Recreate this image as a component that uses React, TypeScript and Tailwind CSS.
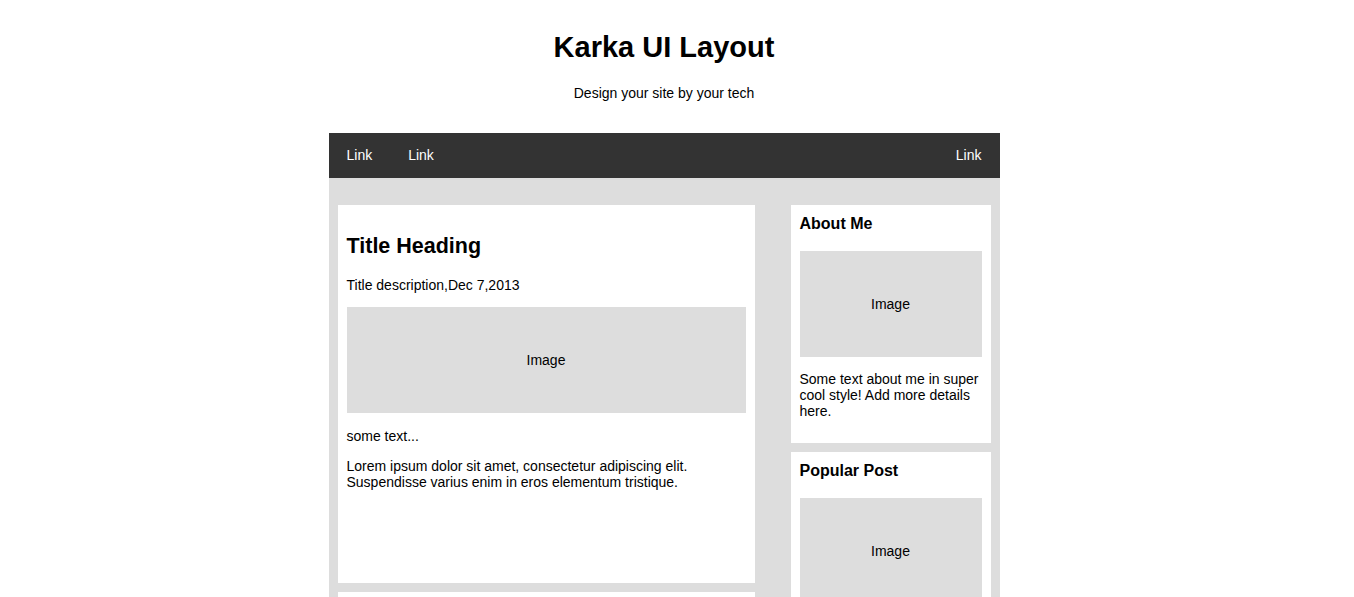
import { FC } from "react";

const ImageBox: FC<{ className?: string }> = ({ className }) => (
  <div
    className={`bg-[#dddddd] h-[106px] flex items-center justify-center text-[14px] leading-[16px] ${className ?? ""}`}
  >
    Image
  </div>
);

const Post: FC = () => (
  <div className="bg-white h-[378px] px-[9px] pt-[29px]">
    <h2 className="text-[21.5px] leading-[24px] font-bold">Title Heading</h2>
    <p className="mt-[19px] text-[14px] leading-[16px]">Title description,Dec 7,2013</p>
    <ImageBox className="mt-[14px]" />
    <p className="mt-[15px] text-[14px] leading-[16px]">some text...</p>
    <p className="mt-[14px] text-[14px] leading-[16px]">
      Lorem ipsum dolor sit amet, consectetur adipiscing elit.
      <br />
      Suspendisse varius enim in eros elementum tristique.
    </p>
  </div>
);

const SideCard: FC<{ title: string; children: React.ReactNode }> = ({ title, children }) => (
  <div className="bg-white px-[9px] pt-[10px] pb-[24px]">
    <h3 className="text-[16px] leading-[18px] font-bold">{title}</h3>
    <div className="mt-[18px]">{children}</div>
  </div>
);

export default function App() {
  return (
    <div className="bg-white text-black font-['Liberation_Sans',Arial,sans-serif] pr-[26px]">
      <div className="w-[671px] mx-auto">
        <header className="pt-[31px] pb-[32px] text-center">
          <h1 className="text-[29px] leading-[32px] font-bold">Karka UI Layout</h1>
          <p className="mt-[22px] text-[14px] leading-[16px]">Design your site by your tech</p>
        </header>

        <nav className="bg-[#333333] h-[45px] flex items-center text-white text-[14px]">
          <a href="#" className="px-[18px]">Link</a>
          <a href="#" className="px-[18px]">Link</a>
          <a href="#" className="px-[18px] ml-auto">Link</a>
        </nav>

        <div className="bg-[#dddddd] px-[9px] pt-[27px] pb-[9px] flex gap-[36px]">
          <div className="w-[417px] flex flex-col gap-[9px]">
            <Post />
            <Post />
            <Post />
            <Post />
          </div>
          <div className="w-[200px] flex flex-col gap-[9px]">
            <SideCard title="About Me">
              <ImageBox />
              <p className="mt-[14px] text-[14px] leading-[16px]">
                Some text about me in super cool style! Add more details here.
              </p>
            </SideCard>
            <SideCard title="Popular Post">
              <div className="flex flex-col gap-[14px]">
                <ImageBox />
                <ImageBox />
                <ImageBox />
              </div>
            </SideCard>
            <SideCard title="Follow Me">
              <p className="text-[14px] leading-[16px]">Some text..</p>
            </SideCard>
          </div>
        </div>

        <footer className="bg-[#dddddd] mt-[9px] py-[20px] text-center text-[14px] leading-[16px]">
          <h2>Footer</h2>
        </footer>
      </div>
    </div>
  );
}
